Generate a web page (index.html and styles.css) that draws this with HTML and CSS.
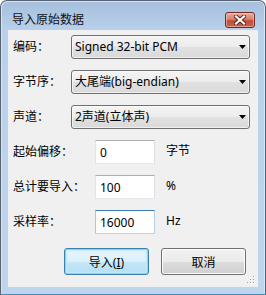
FILE: index.html
```html
<!DOCTYPE html>
<html lang="zh-CN">
<head>
    <meta charset="UTF-8">
    <title>导入原始数据</title>
    <link rel="stylesheet" href="styles.css">
</head>
<body>
    <div class="window">
        <div class="titlebar">
            <span class="title">导入原始数据</span>
            <div class="close-btn">
                <svg width="12" height="10" viewBox="0 0 12 10">
                    <path d="M2 1.5 L10 8.5 M10 1.5 L2 8.5" stroke="#5b1d16" stroke-width="4" stroke-linecap="square"/>
                    <path d="M2 1.5 L10 8.5 M10 1.5 L2 8.5" stroke="#ffffff" stroke-width="2.2" stroke-linecap="square"/>
                </svg>
            </div>
        </div>

        <div class="client">
            <div class="row">
                <label class="label">编码：</label>
                <div class="combo">
                    <span>Signed 32-bit PCM</span>
                    <svg class="arrow" width="7" height="4" viewBox="0 0 7 4"><polygon points="0,0 7,0 3.5,4" fill="#000"/></svg>
                </div>
            </div>
            <div class="row">
                <label class="label">字节序：</label>
                <div class="combo">
                    <span>大尾端(big-endian)</span>
                    <svg class="arrow" width="7" height="4" viewBox="0 0 7 4"><polygon points="0,0 7,0 3.5,4" fill="#000"/></svg>
                </div>
            </div>
            <div class="row">
                <label class="label">声道：</label>
                <div class="combo">
                    <span>2声道(立体声)</span>
                    <svg class="arrow" width="7" height="4" viewBox="0 0 7 4"><polygon points="0,0 7,0 3.5,4" fill="#000"/></svg>
                </div>
            </div>

            <div class="row">
                <label class="label label-wide">起始偏移：</label>
                <input class="field" type="text" value="0">
                <span class="unit">字节</span>
            </div>
            <div class="row">
                <label class="label label-wide">总计要导入：</label>
                <input class="field" type="text" value="100">
                <span class="unit">%</span>
            </div>
            <div class="row">
                <label class="label label-wide">采样率：</label>
                <input class="field field-hot" type="text" value="16000">
                <span class="unit">Hz</span>
            </div>

            <div class="buttons">
                <button type="button" class="btn btn-default">导入(<u>I</u>)</button>
                <button type="button" class="btn">取消</button>
            </div>

            <svg class="grip" width="8" height="8" viewBox="0 0 8 8">
                <rect x="6" y="0" width="1" height="1" fill="#a0a0a0"/>
                <rect x="3" y="3" width="1" height="1" fill="#a0a0a0"/>
                <rect x="6" y="3" width="1" height="1" fill="#a0a0a0"/>
                <rect x="0" y="6" width="1" height="1" fill="#a0a0a0"/>
                <rect x="3" y="6" width="1" height="1" fill="#a0a0a0"/>
                <rect x="6" y="6" width="1" height="1" fill="#a0a0a0"/>
                <rect x="7" y="1" width="1" height="1" fill="#ffffff"/>
                <rect x="4" y="4" width="1" height="1" fill="#ffffff"/>
                <rect x="7" y="4" width="1" height="1" fill="#ffffff"/>
                <rect x="1" y="7" width="1" height="1" fill="#ffffff"/>
                <rect x="4" y="7" width="1" height="1" fill="#ffffff"/>
                <rect x="7" y="7" width="1" height="1" fill="#ffffff"/>
            </svg>
        </div>
    </div>
</body>
</html>
```

FILE: styles.css
```css
body {
    margin: 0;
    font-family: "Noto Sans", "Noto Sans CJK SC", sans-serif;
    font-size: 12px;
    color: #000;
}
.window {
    width: 266px;
    height: 295px;
    box-sizing: border-box;
    border: 1px solid #58636f;
    border-bottom-color: #3f8fb0;
    border-radius: 7px 7px 0 0;
    padding: 0 7px 7px;
    background: linear-gradient(#a5bfdd, #b9d1eb 30px, #bfd5ed);
    box-shadow: inset 1px 1px 0 #d6e4f3, inset -1px 0 0 #d6e4f3;
    display: flex;
    flex-direction: column;
}
.titlebar {
    height: 29px;
    box-sizing: border-box;
    padding: 8px 3px 0 4px;
    display: flex;
    align-items: center;
    justify-content: space-between;
}
.title {
    line-height: 16px;
    color: #111;
}
.close-btn {
    width: 30px;
    height: 16px;
    box-sizing: border-box;
    border: 1px solid #6e2a22;
    border-radius: 3px;
    background: linear-gradient(#e9a99b, #d7826f 45%, #c34b3a 55%, #c9624c);
    box-shadow: inset 0 0 0 1px rgba(255, 220, 210, 0.5);
    display: flex;
    align-items: center;
    justify-content: center;
}
.client {
    flex: 1;
    position: relative;
    background: #f0f0f0;
    padding: 5px 8px 0 5px;
    display: flex;
    flex-direction: column;
    gap: 11px;
}
.row {
    height: 24px;
    display: flex;
    align-items: center;
}
.label {
    width: 58px;
    flex: none;
    line-height: 16px;
}
.label-wide {
    width: 82px;
}
.combo {
    width: 179px;
    height: 24px;
    box-sizing: border-box;
    border: 1px solid #707070;
    border-radius: 3px;
    background: linear-gradient(#f4f4f4, #ececec 48%, #e1e1e1 52%, #d9d9d9);
    box-shadow: inset 0 0 0 1px rgba(255, 255, 255, 0.6);
    padding: 0 3px 0 3px;
    display: flex;
    align-items: center;
    justify-content: space-between;
    line-height: 16px;
}
.field {
    width: 60px;
    height: 24px;
    box-sizing: border-box;
    margin: 0;
    border: 1px solid;
    border-color: #abadb3 #dbdfe6 #e3e9ef #e2e3ea;
    padding: 0 4px;
    background: #fff;
    font: inherit;
    outline: none;
}
.field-hot {
    border-color: #3d7bad #b5cfe7 #b7d9ed #a4c9e3;
}
.unit {
    align-self: flex-start;
    margin: 3px 0 0 11px;
    line-height: 16px;
}
.buttons {
    margin-top: 3px;
    padding-right: 4px;
    display: flex;
    justify-content: flex-end;
    gap: 12px;
}
.btn {
    width: 85px;
    height: 27px;
    margin: 0;
    border: 1px solid #707070;
    border-radius: 3px;
    background: linear-gradient(#f2f2f2, #ebebeb 50%, #dddddd 50%, #cfcfcf);
    box-shadow: inset 0 0 0 1px #fcfcfc;
    font: inherit;
    color: #000;
    padding: 0;
}
.btn-default {
    border-color: #3c7fb1;
    background: linear-gradient(#eaf6fd, #d9f0fc 50%, #c6e7f8 50%, #b4def5);
    box-shadow: inset 0 0 0 1px #7fd8f8, inset 0 0 2px 2px #c2ecfb;
}
.grip {
    position: absolute;
    right: 3px;
    bottom: 3px;
}
```
